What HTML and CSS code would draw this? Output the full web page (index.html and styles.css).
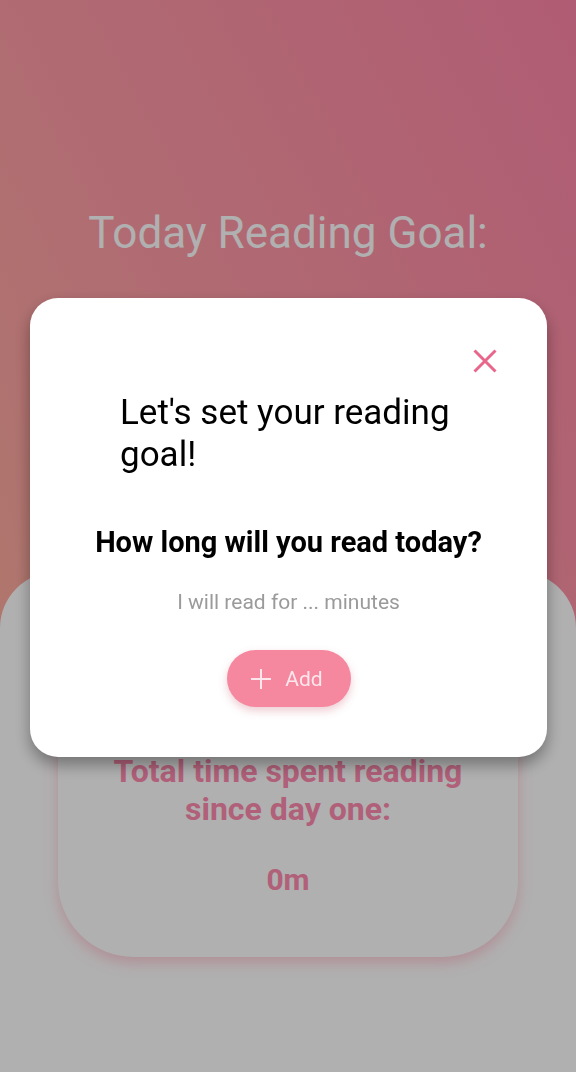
FILE: index.html
```html
<!DOCTYPE html>
<html lang="en">
<head>
<meta charset="utf-8">
<title>Reading Goal</title>
<link rel="stylesheet" href="styles.css">
</head>
<body>
<div class="screen">
  <header class="hero">
    <h1 class="hero-title">Today Reading Goal:</h1>
  </header>
  <main class="sheet">
    <section class="total-card">
      <p class="total-label">Total time spent reading since day one:</p>
      <p class="total-value">0m</p>
    </section>
  </main>
</div>

<div class="overlay">
  <div class="modal" role="dialog" aria-label="Set reading goal">
    <div class="modal-top">
      <button class="close-btn" aria-label="Close">
        <svg viewBox="0 0 24 24" width="24" height="24"><path d="M1.5 1.5 L22.5 22.5 M22.5 1.5 L1.5 22.5" stroke="#e8668c" stroke-width="3" fill="none"/></svg>
      </button>
    </div>
    <h2 class="modal-title">Let's set your reading goal!</h2>
    <p class="modal-question">How long will you read today?</p>
    <p class="modal-input">I will read for ... minutes</p>
    <div class="modal-actions">
      <button class="add-btn">
        <svg viewBox="0 0 22 22" width="22" height="22"><path d="M11 1 V21 M1 11 H21" stroke="#fde6ec" stroke-width="2" fill="none"/></svg>
        <span>Add</span>
      </button>
    </div>
  </div>
</div>
</body>
</html>
```

FILE: styles.css
```css
* { box-sizing: border-box; }

html, body {
  margin: 0;
  padding: 0;
}

body {
  font-family: Roboto, "Noto Sans", "Liberation Sans", sans-serif;
  width: 576px;
  height: 1072px;
  overflow: hidden;
}

.screen {
  display: flex;
  flex-direction: column;
  height: 1072px;
  background: linear-gradient(to top right, #ffb99a 0%, #ff9fa5 45%, #ff86a8 100%);
}

.hero {
  height: 572px;
  flex: none;
  padding-top: 207px;
}

.hero-title {
  margin: 0;
  text-align: center;
  color: #ffffff;
  font-weight: 400;
  font-size: 44px;
  line-height: 52px;
}

.sheet {
  flex: 1;
  background: #ffffff;
  border-radius: 56px 56px 0 0;
  padding: 40px 58px 0;
}

.total-card {
  background: #ffffff;
  border-radius: 34px 34px 76px 76px;
  box-shadow: 0 6px 14px rgba(255, 120, 150, 0.35);
  padding: 140px 30px 60px;
  text-align: center;
  color: #ff8bb0;
}

.total-label {
  margin: 0 auto;
  max-width: 370px;
  font-weight: 700;
  font-size: 32px;
  line-height: 38px;
}

.total-value {
  margin: 35px 0 0;
  font-weight: 700;
  font-size: 30px;
  line-height: 34px;
}

.overlay {
  position: fixed;
  inset: 0;
  background: rgba(0, 0, 0, 0.31);
  display: flex;
  justify-content: center;
  align-items: flex-start;
  padding-top: 298px;
}

.modal {
  width: 517px;
  margin-left: 1px;
  background: #ffffff;
  border-radius: 28px;
  box-shadow: 0 8px 16px rgba(0, 0, 0, 0.35);
  padding: 51px 0 50px;
}

.modal-top {
  display: flex;
  justify-content: flex-end;
  padding-right: 50px;
}

.close-btn {
  width: 24px;
  height: 24px;
  padding: 0;
  border: 0;
  background: none;
  display: block;
}

.close-btn svg { display: block; }

.modal-title {
  margin: 19px 90px 0;
  font-weight: 400;
  font-size: 35px;
  line-height: 42px;
  color: #000000;
}

.modal-question {
  margin: 49px 0 0;
  text-align: center;
  font-weight: 700;
  font-size: 29px;
  line-height: 34px;
  color: #000000;
}

.modal-input {
  margin: 31px 0 0;
  text-align: center;
  font-size: 21px;
  line-height: 24px;
  color: #9a9a9a;
}

.modal-actions {
  display: flex;
  justify-content: center;
  margin-top: 36px;
}

.add-btn {
  display: flex;
  align-items: center;
  gap: 13px;
  height: 57px;
  width: 124px;
  justify-content: center;
  border: 0;
  border-radius: 29px;
  background: #f5879f;
  box-shadow: 0 4px 8px rgba(200, 90, 110, 0.3);
  color: #fde6ec;
  font-family: Roboto, "Noto Sans", sans-serif;
  font-size: 21px;
  padding: 0 4px 0 0;
}

.add-btn svg { display: block; }
```
